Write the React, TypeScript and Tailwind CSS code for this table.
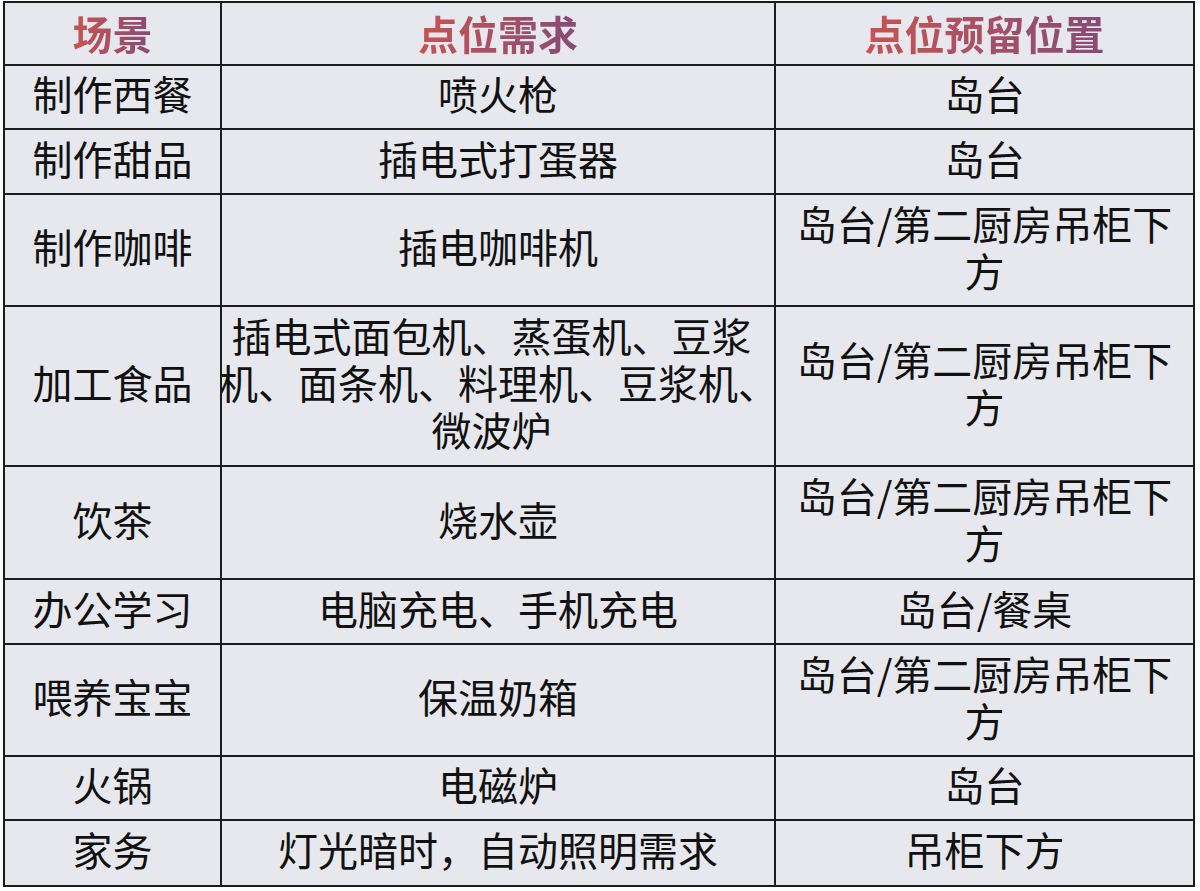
const rows: { h: string; a: string[]; b: string[]; c: string[]; shift?: boolean }[] = [
  { h: "h-[64px]", a: ["制作西餐"], b: ["喷火枪"], c: ["岛台"] },
  { h: "h-[65px]", a: ["制作甜品"], b: ["插电式打蛋器"], c: ["岛台"] },
  { h: "h-[112px]", a: ["制作咖啡"], b: ["插电咖啡机"], c: ["岛台/第二厨房吊柜下", "方"] },
  {
    h: "h-[160px]",
    a: ["加工食品"],
    b: ["插电式面包机、蒸蛋机、豆浆", "机、面条机、料理机、豆浆机、", "微波炉"],
    c: ["岛台/第二厨房吊柜下", "方"],
    shift: true,
  },
  { h: "h-[113px]", a: ["饮茶"], b: ["烧水壶"], c: ["岛台/第二厨房吊柜下", "方"] },
  { h: "h-[65px]", a: ["办公学习"], b: ["电脑充电、手机充电"], c: ["岛台/餐桌"] },
  { h: "h-[112px]", a: ["喂养宝宝"], b: ["保温奶箱"], c: ["岛台/第二厨房吊柜下", "方"] },
  { h: "h-[64px]", a: ["火锅"], b: ["电磁炉"], c: ["岛台"] },
  { h: "h-[64px]", a: ["家务"], b: ["灯光暗时，自动照明需求"], c: ["吊柜下方"] },
];

function Cell({ lines, last, shift }: { lines: string[]; last?: boolean; shift?: boolean }) {
  return (
    <div
      className={`flex flex-col items-center justify-center pb-[7px] ${
        shift ? "overflow-hidden" : ""
      } ${last ? "" : "border-r-2 border-[#1c1c1c]"}`}
    >
      {lines.map((l, i) => (
        <div
          key={i}
          className={`whitespace-nowrap leading-[47px] ${shift && i !== 1 ? "mr-[13px]" : ""}`}
        >
          {l}
        </div>
      ))}
    </div>
  );
}

function Head({ text, last }: { text: string; last?: boolean }) {
  return (
    <div
      className={`flex items-center justify-center pb-[7px] ${
        last ? "" : "border-r-2 border-[#1c1c1c]"
      }`}
    >
      <span className="inline-block bg-gradient-to-r from-[#c9524f] to-[#874a74] bg-clip-text font-bold text-transparent">
        {text}
      </span>
    </div>
  );
}

export default function App() {
  return (
    <div className="h-[891px] w-[1200px] bg-white pl-[3px] pt-[1px] text-[40px] text-[#111]" style={{ fontFamily: '"Noto Sans CJK SC", "Noto Sans", sans-serif' }}>
      <div className="w-[1192px] border-2 border-[#1c1c1c] bg-[#e6e8ed]">
        <div className="grid h-[63px] grid-cols-[217px_554px_417px] border-b-2 border-[#1c1c1c]">
          <Head text="场景" />
          <Head text="点位需求" />
          <Head text="点位预留位置" last />
        </div>
        {rows.map((r, i) => (
          <div
            key={i}
            className={`grid grid-cols-[217px_554px_417px] ${r.h} ${
              i === rows.length - 1 ? "" : "border-b-2 border-[#1c1c1c]"
            }`}
          >
            <Cell lines={r.a} />
            <Cell lines={r.b} shift={r.shift} />
            <Cell lines={r.c} last />
          </div>
        ))}
      </div>
    </div>
  );
}
